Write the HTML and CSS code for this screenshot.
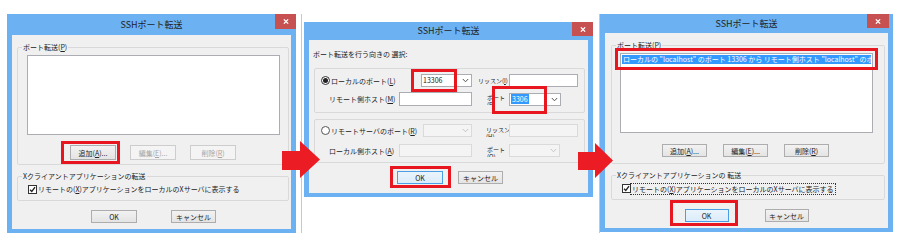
FILE: index.html
```html
<!DOCTYPE html>
<html lang="ja">
<head>
<meta charset="utf-8">
<title>SSHポート転送</title>
<link rel="stylesheet" href="styles.css">
</head>
<body>
<div class="stage">

  <!-- Dialog 1 -->
  <div class="dlg d1">
    <div class="tb"><span class="tt">SSHポート転送</span><span class="close"><svg class="x" viewBox="0 0 8 7"><path d="M1 0.5L7 6.5M7 0.5L1 6.5"/></svg></span></div>
    <div class="bd">
      <fieldset class="grp g1">
        <legend>ポート転送(<u>P</u>)</legend>
        <div class="list"></div>
        <div class="btnrow">
          <span class="btn w46">追加(<u>A</u>)...</span>
          <span class="btn w46 dis">編集(<u>E</u>)...</span>
          <span class="btn w46 dis">削除(<u>R</u>)</span>
        </div>
      </fieldset>
      <fieldset class="grp g2">
        <legend>Xクライアントアプリケーションの転送</legend>
        <div class="chk"><span class="cb"><svg viewBox="0 0 8 8"><path d="M1.2 4.2L3.2 6.3L6.9 1.4"/></svg></span><span class="chktxt">リモートの(<u>X</u>)アプリケーションをローカルのXサーバに表示する</span></div>
      </fieldset>
      <div class="okrow">
        <span class="btn w46">OK</span>
        <span class="btn w45">キャンセル</span>
      </div>
    </div>
  </div>

  <!-- Dialog 2 -->
  <div class="wrap">
    <div class="dlg d2">
      <div class="tb"><span class="tt">SSHポート転送</span><span class="close"><svg class="x" viewBox="0 0 8 7"><path d="M1 0.5L7 6.5M7 0.5L1 6.5"/></svg></span></div>
      <div class="bd">
        <div class="hdr">ポート転送を行う向きの 選択:</div>
        <fieldset class="grp f1">
          <div class="row ra">
            <span class="radio on"></span>
            <span class="lb l-local">ローカルのポート(<u>L</u>)</span>
            <span class="combo c51"><span class="val">13306</span><svg class="chev" viewBox="0 0 7 5"><path d="M0.8 1L3.5 3.8L6.2 1"/></svg></span>
            <span class="lb sm l-listen">リッスン(<u>I</u>)</span>
            <span class="inp i69"></span>
          </div>
          <div class="row rb">
            <span class="lb l-host">リモート側ホスト(<u>M</u>)</span>
            <span class="inp i73"></span>
            <span class="lb stk l-port">ポート<br>(<u>P</u>)</span>
            <span class="combo c52"><span class="val"><span class="sel">3306</span></span><svg class="chev" viewBox="0 0 7 5"><path d="M0.8 1L3.5 3.8L6.2 1"/></svg></span>
          </div>
        </fieldset>
        <fieldset class="grp f2">
          <div class="row ra">
            <span class="radio"></span>
            <span class="lb l-remote">リモートサーバのポート(<u>R</u>)</span>
            <span class="combo dis c49"><span class="val"></span><svg class="chev" viewBox="0 0 7 5"><path d="M0.8 1L3.5 3.8L6.2 1"/></svg></span>
            <span class="lb stk l-listen2">リッスン<br>(<u>H</u>)</span>
            <span class="inp dis i69"></span>
          </div>
          <div class="row rc">
            <span class="lb l-host">ローカル側ホスト(<u>A</u>)</span>
            <span class="inp dis i73"></span>
            <span class="lb stk l-port">ポート<br>(<u>O</u>)</span>
            <span class="combo dis c51"><span class="val"></span><svg class="chev" viewBox="0 0 7 5"><path d="M0.8 1L3.5 3.8L6.2 1"/></svg></span>
          </div>
        </fieldset>
        <div class="okrow">
          <span class="btn w46 focus">OK</span>
          <span class="btn w45">キャンセル</span>
        </div>
      </div>
    </div>
  </div>

  <!-- Dialog 3 -->
  <div class="dlg d3">
    <div class="tb"><span class="tt">SSHポート転送</span><span class="close"><svg class="x" viewBox="0 0 8 7"><path d="M1 0.5L7 6.5M7 0.5L1 6.5"/></svg></span></div>
    <div class="bd">
      <fieldset class="grp g1">
        <legend>ポート転送(<u>P</u>)</legend>
        <div class="list">
          <div class="item">ローカルの "localhost" のポート 13306 から リモート側ホスト "localhost" のポート 3306 への転送</div>
        </div>
        <div class="btnrow">
          <span class="btn w45">追加(<u>A</u>)...</span>
          <span class="btn w45">編集(<u>E</u>)...</span>
          <span class="btn w45">削除(<u>R</u>)</span>
        </div>
      </fieldset>
      <fieldset class="grp g2">
        <legend>Xクライアントアプリケーションの 転送</legend>
        <div class="chk"><span class="cb"><svg viewBox="0 0 8 8"><path d="M1.2 4.2L3.2 6.3L6.9 1.4"/></svg></span><span class="chktxt focusring">リモートの(<u>X</u>)アプリケーションをローカルのXサーバに表示する</span></div>
      </fieldset>
      <div class="okrow">
        <span class="btn w44 focus">OK</span>
        <span class="btn w44">キャンセル</span>
      </div>
    </div>
  </div>

</div>

<!-- annotations over the screenshots -->
<div class="ann a1"></div>
<div class="ann a2"></div>
<div class="ann a3"></div>
<div class="ann a4"></div>
<div class="ann a5"></div>
<div class="ann a6"></div>
<svg class="arrows" viewBox="0 0 901 250" width="901" height="250">
  <polygon points="282,151 300,151 300,141 320,159.5 300,178 300,170 282,170"/>
  <polygon points="578,152 595,152 595,143 613,160.5 595,178 595,170 578,170"/>
</svg>
</body>
</html>
```

FILE: styles.css
```css
* { box-sizing: border-box; }
html, body { margin: 0; padding: 0; background: #fff; }
body {
  width: 901px;
  height: 250px;
  overflow: hidden;
  position: relative;
  font-family: "Noto Sans CJK JP", "Noto Sans", sans-serif;
  font-size: 7px;
  line-height: 10px;
  color: #222;
}
u { text-decoration: underline; text-underline-offset: 1px; }

.stage { display: flex; align-items: flex-start; padding: 14px 0 0 7px; }

/* window frame */
.dlg { background: #6cb2f2; display: flex; flex-direction: column; }
.d1 { width: 289px; height: 219px; }
.wrap {
  margin-left: 5px;
  width: 299px;
  height: 219px;
  border-left: 1px solid #a9cff3;
  border-right: 1px solid #a9cff3;
  padding: 8px 0 0 2px;
}
.d2 { width: 289px; height: 175px; }
.d3 { width: 293px; height: 218px; }

.tb { display: grid; grid-template-columns: 1fr auto 1fr; align-items: center; }
.tt { grid-column: 2; font-size: 9px; line-height: 12px; color: #1e1e1e; }
.close {
  grid-column: 3;
  justify-self: end;
  align-self: start;
  background: #c75050;
  display: flex;
  align-items: center;
  justify-content: center;
}
.x { width: 6px; height: 5px; }
.x path { stroke: #fff; stroke-width: 1.8; fill: none; }
.d1 .tb { height: 21px; }
.d1 .close { width: 21px; height: 15px; }
.d2 .tb { height: 18px; }
.d2 .close { width: 21px; height: 14px; }
.d3 .tb { height: 19px; padding: 0 4px; }
.d3 .close { width: 22px; height: 14px; }

.bd {
  background: #f0f0f0;
  margin: 0 5px 4px;
  flex: 1;
  display: flex;
  flex-direction: column;
}

/* group boxes */
.grp {
  margin: 0;
  padding: 0;
  border: 1px solid #d9d9d9;
  border-radius: 2px;
  min-width: 0;
  flex: none;
}
legend { padding: 0 1px; margin-left: 4px; line-height: 10px; color: #222; }

/* buttons */
.btn {
  display: flex;
  align-items: center;
  justify-content: center;
  height: 13px;
  border: 1px solid #adadad;
  background: linear-gradient(#f2f2f2, #e4e4e4);
  color: #222;
  white-space: nowrap;
}
.btn.dis { color: #a6a6a6; border-color: #cdcdcd; background: #f4f4f4; }
.btn.focus { border-color: #4a9ee6; background: linear-gradient(#eaf4fc, #dcecfa); }
.w44 { width: 44px; }
.w45 { width: 45px; }
.w46 { width: 46px; }

.list { background: #fff; border: 1px solid #abadb3; width: 253px; height: 80px; }
.btnrow { display: flex; justify-content: center; }
.okrow { display: flex; justify-content: center; }

/* checkbox */
.chk { display: flex; align-items: center; }
.cb {
  width: 9px;
  height: 9px;
  border: 1px solid #333;
  background: #fff;
  display: flex;
  align-items: center;
  justify-content: center;
  flex: none;
}
.cb svg { width: 7px; height: 7px; }
.cb path { stroke: #222; stroke-width: 1.5; fill: none; }
.chktxt { white-space: nowrap; line-height: 10px; }

/* ---- dialog 1 ---- */
.d1 .g1 { margin: 7px 0 0 5px; width: 272px; }
.d1 .list { margin: 3px 0 0 9px; }
.d1 .btnrow { margin-top: 10px; padding-bottom: 4px; gap: 14px; }
.d1 .btnrow .btn { height: 15px; }
.d1 .g2 { margin: 6px 0 0 5px; width: 272px; }
.d1 .chk { margin-top: 2px; padding-left: 10px; padding-bottom: 5px; height: 17px; gap: 1px; }
.d1 .okrow { margin-top: 9px; padding-left: 4px; gap: 34px; }

/* ---- dialog 2 ---- */
.hdr { padding: 9px 0 0 4px; }
.row { display: flex; align-items: center; }
.d2 .f1 { margin: 9px 0 0 5px; width: 271px; padding: 5px 0 6px; }
.d2 .f2 { margin: 6px 0 0 5px; width: 271px; padding: 4px 0 5px; }
.ra { height: 13px; padding-left: 6px; }
.rb { height: 14px; padding-left: 14px; margin-top: 5px; }
.rc { height: 13px; padding-left: 14px; margin-top: 7px; }

.radio {
  width: 9px;
  height: 9px;
  border: 1px solid #333;
  border-radius: 50%;
  background: #fff;
  flex: none;
  margin-right: 1px;
  display: flex;
  align-items: center;
  justify-content: center;
}
.radio.on::before {
  content: "";
  width: 5px;
  height: 5px;
  border-radius: 50%;
  background: #222;
}
.f2 .radio { border-color: #555; }

.lb { white-space: nowrap; flex: none; }
.sm { font-size: 6px; }
.stk { font-size: 6px; line-height: 7px; height: 13px; overflow: hidden; padding-top: 2px; align-self: flex-start; }
.l-local { width: 90px; }
.l-remote { width: 92px; }
.l-listen { width: 31px; margin-left: 6px; }
.l-listen2 { width: 23px; margin-left: 14px; }
.l-host { width: 70px; }
.l-port { width: 22px; margin-left: 15px; }

.inp { height: 13px; background: #fff; border: 1px solid #abadb3; flex: none; }
.rb .inp { height: 14px; }
.inp.dis { background: #f4f4f4; border-color: #dadada; }
.i69 { width: 69px; }
.i73 { width: 73px; }

.combo {
  height: 13px;
  background: #fff;
  border: 1px solid #abadb3;
  display: flex;
  align-items: center;
  justify-content: space-between;
  padding: 0 2px 0 1px;
  flex: none;
}
.combo.dis { background: #f4f4f4; border-color: #dadada; }
.combo .val { line-height: 9px; }
.sel { background: #3399ff; color: #fff; padding: 0 1px; }
.chev { width: 7px; height: 5px; }
.chev path { stroke: #555; stroke-width: 1; fill: none; }
.combo.dis .chev path { stroke: #c4c4c4; }
.c49 { width: 49px; }
.c51 { width: 51px; }
.c52 { width: 52px; }

.d2 .okrow { margin-top: 8px; padding-left: 3px; gap: 15px; }

/* ---- dialog 3 ---- */
.d3 .g1 { margin: 7px 0 0 6px; width: 274px; }
.d3 .list { margin: 3px 0 0 8px; padding: 1px; overflow: hidden; }
.item {
  height: 9px;
  line-height: 9px;
  background: #3399ff;
  color: #fff;
  white-space: nowrap;
  overflow: hidden;
  padding-left: 1px;
}
.d3 .btnrow { margin-top: 11px; padding: 0 5px 6px 0; gap: 16px; }
.d3 .g2 { margin: 6px 0 0 6px; width: 274px; }
.d3 .chk { margin-top: 2px; padding-left: 10px; padding-bottom: 4px; height: 17px; }
.focusring { outline: 1px dotted #333; outline-offset: 0; padding: 0 1px; }
.d3 .okrow { margin-top: 9px; gap: 36px; }

/* ---- annotations ---- */
.ann { position: absolute; border: 3px solid #e8161f; }
.a1 { left: 61px; top: 141px; width: 59px; height: 23px; }
.a2 { left: 411px; top: 69px; width: 46px; height: 23px; }
.a3 { left: 492px; top: 86px; width: 55px; height: 28px; }
.a4 { left: 390px; top: 166px; width: 61px; height: 22px; }
.a5 { left: 615px; top: 48px; width: 263px; height: 22px; }
.a6 { left: 670px; top: 200px; width: 68px; height: 26px; }
.arrows { position: absolute; left: 0; top: 0; pointer-events: none; }
.arrows polygon { fill: #ec1c24; }
```
